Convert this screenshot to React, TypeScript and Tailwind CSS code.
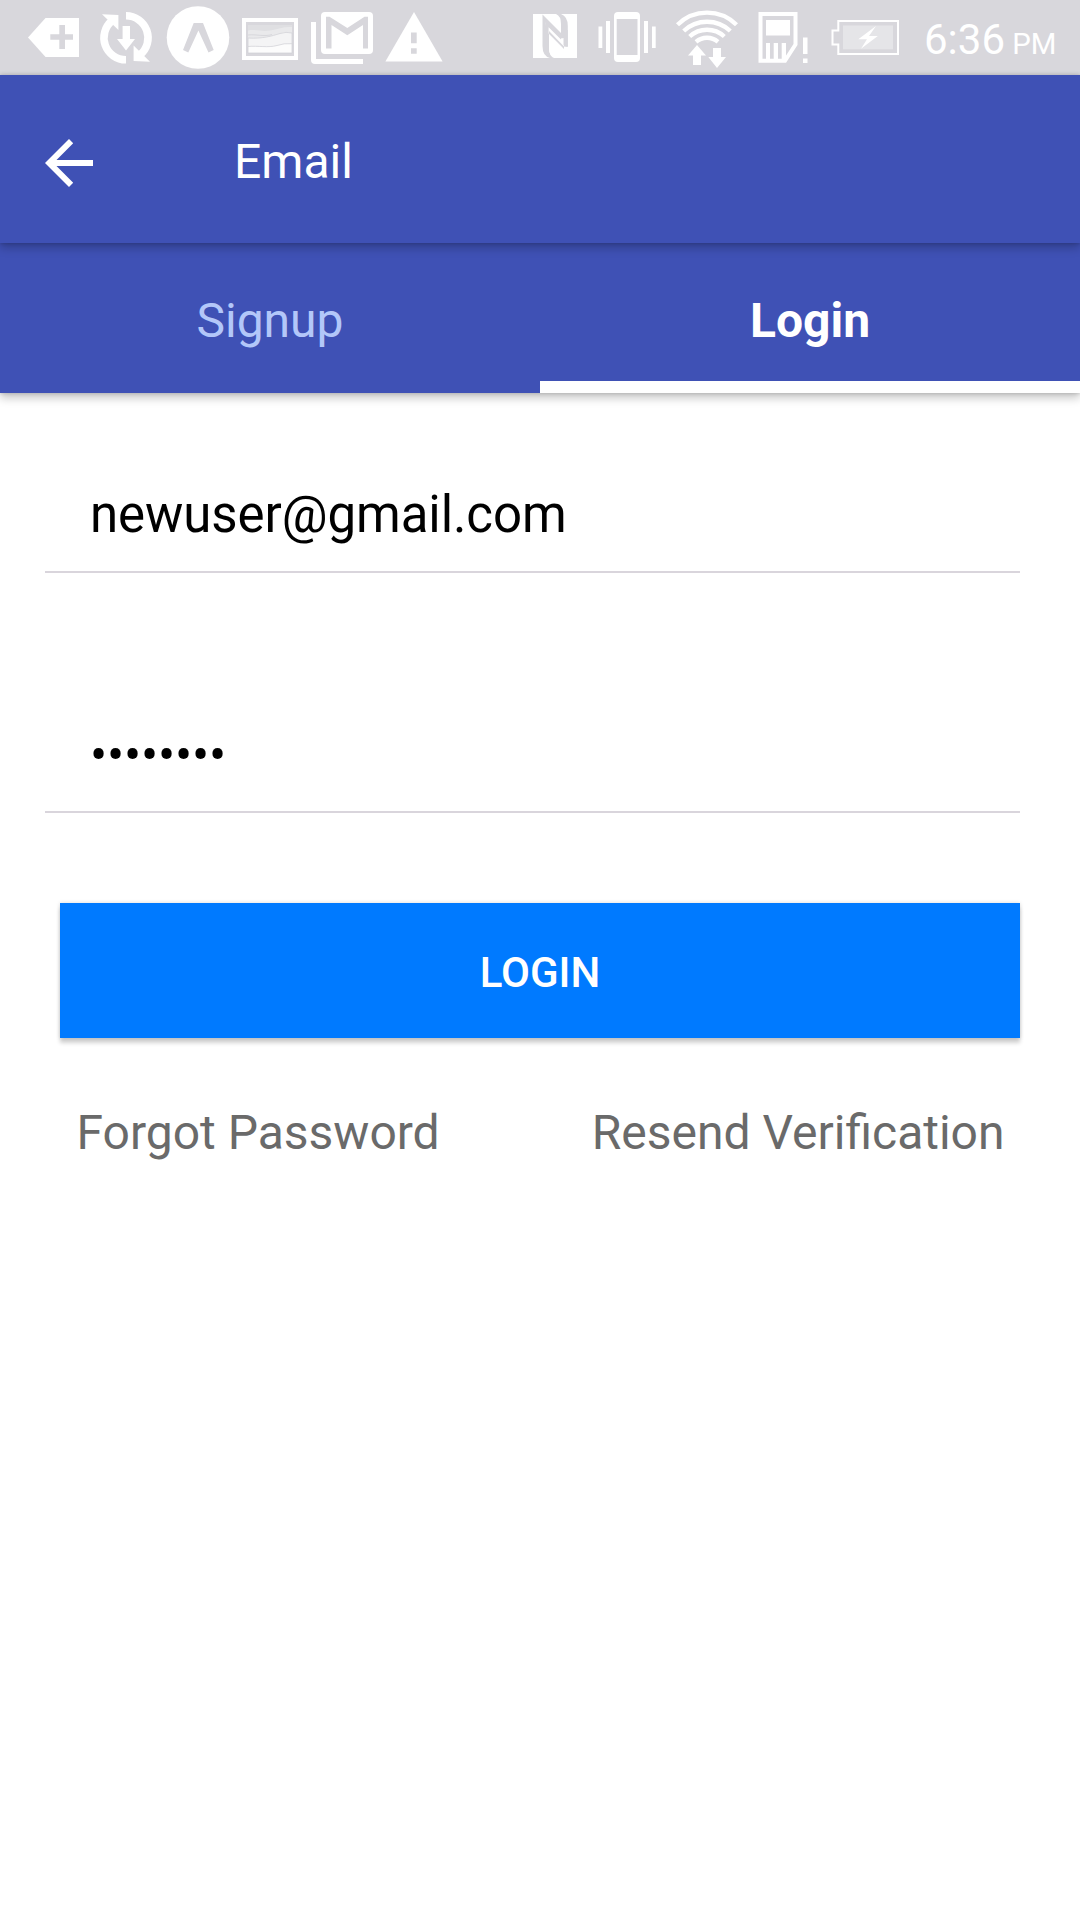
import React from "react";

const G = "#d8d7dc";

function Glyph({ x, w, children }: { x: number; w: number; children: React.ReactNode }) {
  return (
    <svg className="shrink-0" width={w} height={75} viewBox={`${x} 0 ${w} 75`} fill="#fff">
      {children}
    </svg>
  );
}

function StatusBar() {
  return (
    <div className="flex h-[75px] items-center bg-[#d8d7dc]">
      <div className="flex pl-5">
        <Glyph x={20} w={70}>
          <path d="M28 37.5 45.5 18H79V57H45.5Z" />
          <path fill={G} d="M59.3 25H65V34.3H73V39.7H65V49H59.3V39.7H50.3V34.3H59.3Z" />
        </Glyph>
        <Glyph x={90} w={70}>
          <path fill="none" stroke="#fff" strokeWidth="7.6" d="M126 59.8A22 22 0 0 1 112 20.8M126 15.8A22 22 0 0 1 140 54.8" />
          <path d="M102 14.2 118.4 15V30ZM150 61.8 133.6 61V45.5ZM122.6 26H130V39H135L126 50.5 117 39H122.6Z" />
        </Glyph>
        <Glyph x={160} w={76}>
          <circle cx="198" cy="37.5" r="31.3" />
          <path fill={G} d="M183 50 193.7 23H203L213.7 50 208.5 52.5 198.4 30.5 188.3 52.5Z" />
        </Glyph>
        <Glyph x={236} w={70}>
          <path d="M242 18H298V60H242Z" />
          <path fill={G} d="M246 22H294V56H246Z" />
          <path fill="#dfdfe2" d="M248 25H292V53H248Z" />
          <path fill="#e9e9eb" d="M248 30.5C256 29 262 32 270 30.5S284 26.5 292 27V53H248Z" />
          <path fill="#f4f4f5" stroke="#d3d3d8" strokeWidth=".8" d="M248 38C262 39 272 36 280 33.5Q286 31.5 292 33V53H248Z" />
          <path fill="#fcfcfc" stroke="#d3d3d8" strokeWidth=".8" d="M248 46.5C258 45.5 268 48 277 45.5Q284 43 292 43.7V53H248Z" />
          <path fill="none" stroke="#d3d3d8" strokeWidth=".8" d="M248 35C256 34 264 37 272 34.5" />
        </Glyph>
        <Glyph x={306} w={72}>
          <rect x="321" y="12" width="52" height="42" rx="4" />
          <path d="M311 22H316V59H363V64H315Q311 64 311 60Z" />
          <path fill={G} d="M326 16.8H329.5L347.3 28 364.5 16.8H368V48.5H363V25L347.3 35.2 331.5 25V48.5H326Z" />
        </Glyph>
        <Glyph x={378} w={72}>
          <path d="M414 12 442.6 61.6H385.4Z" />
          <path fill={G} d="M411 32.5H416.7V43.3H411ZM411 48.3H416.7V53.7H411Z" />
        </Glyph>
      </div>
      <div className="ml-[70px] flex">
        <Glyph x={520} w={68}>
          <path d="M533 14H577V58H533Z" />
          <path fill={G} d="M542.5 14.5 561 33V24Q561 16 556 14H561Q567.8 16.5 567.8 26V57.5L549 38.5V48Q549 56 554 58H550Q542.5 56 542.5 46Z" />
          <path d="M545.8 22.5 547.2 24 561.5 38.5 563.5 38V46.5L549 31.5V38H546.6Z" />
          <path d="M564.2 46 549 31V48Q549 56 556 58H568V46Z" />
          <path fill={G} d="M546 20.5 561 35.5V39.5L548.6 27.2V33.5L564 49V30H567.8V47L564 46.5 549 31V48H545Z" />
        </Glyph>
        <Glyph x={588} w={78}>
          <rect x="614" y="12" width="26" height="50" rx="4" />
          <path fill={G} d="M616.7 19H637.5V55H616.7Z" />
          <path d="M606 21H610V53H606ZM644 21H648V53H644ZM598.5 26.5H602.3V48H598.5ZM652 26.5H655.7V48H652Z" />
        </Glyph>
        <Glyph x={666} w={80}>
          <g fill="none" stroke="#fff" strokeWidth="4.3">
            <path d="M677.5 24.8A42 42 0 0 1 736.5 24.8M683.7 31A34 34 0 0 1 730.3 31M689.7 36.5A25.5 25.5 0 0 1 724.3 36.5M696 41.8A17 17 0 0 1 718 41.8" />
          </g>
          <path d="M697 45 706 55.5H701V65H693V55.5H688ZM713 48H721V57H726L717 68 708.3 57H713Z" />
        </Glyph>
        <Glyph x={746} w={76}>
          <path fill="none" stroke="#fff" strokeWidth="4" d="M760.5 14H795.5V44.5L785 60.8H760.5Z" />
          <path d="M766 20H790V35.5H766ZM766 43H770V60H766ZM773.7 43H778V60H773.7ZM781.7 43H786V60H781.7ZM803 37.5H807.5V54H803ZM803 58.5H807.5V63H803Z" />
        </Glyph>
        <Glyph x={822} w={80}>
          <path fill="none" stroke="#fff" strokeWidth="2" d="M838.3 21H898V54H838.3V44.5H832.5V30.5H838.3Z" />
          <path fill="#e5e5e8" d="M843 25.5H893V49.2H843Z" />
          <path d="M876 26 858.3 39.3H867L861 48.8 877.8 36H869Z" />
        </Glyph>
      </div>
      <div className="ml-[22px] whitespace-nowrap pt-1 leading-none text-white">
        <span className="text-[42px]">6:36</span>
        <span className="text-[29.4px]"> PM</span>
      </div>
    </div>
  );
}

export default function App() {
  return (
    <div className="flex h-[1920px] w-[1080px] flex-col overflow-hidden bg-white font-['Roboto',sans-serif]">
      <StatusBar />

      <header className="relative z-20 flex h-[168px] items-center bg-[#3f51b5] pl-[45px] shadow-[0_5px_9px_rgba(0,0,0,0.22),0_0_4px_rgba(0,0,0,0.2)]">
        <svg width="48" height="48" viewBox="0 0 48 48" fill="#fff" className="mt-[7px]">
          <path d="M48 21H11.5L28.2 4.2 24 0 0 24 24 48 28.2 43.8 11.5 27H48Z" />
        </svg>
        <h1 className="ml-[141px] pt-1.5 text-[48px] leading-none text-white">Email</h1>
      </header>

      <nav className="relative z-10 grid h-[150px] shrink-0 grid-cols-2 bg-[#3f51b5] text-[48px] leading-none shadow-[0_5px_9px_rgba(0,0,0,0.22),0_0_4px_rgba(0,0,0,0.2)]">
        <button className="flex items-center justify-center pt-1.5 text-[#b3c7f9]">Signup</button>
        <button className="flex items-center justify-center border-b-[12px] border-white pt-[18px] font-bold text-white">Login</button>
      </nav>

      <main className="flex flex-col pl-[45px] pr-[60px] text-black">
        <input
          type="email"
          defaultValue="newuser@gmail.com"
          className="mt-[60px] h-[120px] border-b-2 border-[#d9d5dc] pl-[45px] pt-[5px] text-[51px] tracking-[-0.08px] outline-none"
        />
        <input
          type="password"
          defaultValue="password"
          className="mt-[120px] h-[120px] border-b-2 border-[#d9d5dc] pl-[45px] pt-[6px] text-[51px] tracking-[-0.2px] outline-none"
        />
        <button className="ml-[15px] mt-[90px] h-[135px] bg-[#007aff] pt-1 text-[42px] font-medium text-white shadow-[0_5px_4px_rgba(0,0,0,0.18),0_0_4px_rgba(0,0,0,0.15)]">
          LOGIN
        </button>
        <div className="ml-[15px] mt-[67px] flex justify-between pl-[16.5px] pr-[15.5px] text-[48px] leading-[56px] text-[#6a6a6a]">
          <a>Forgot Password</a>
          <a>Resend Verification</a>
        </div>
      </main>
    </div>
  );
}
